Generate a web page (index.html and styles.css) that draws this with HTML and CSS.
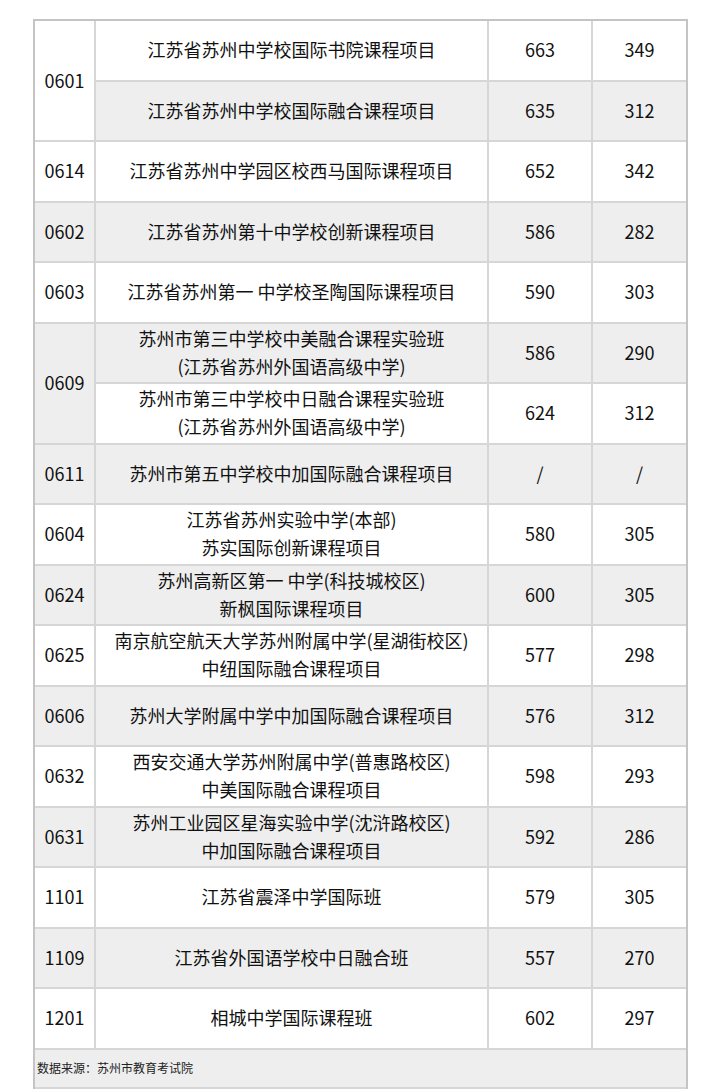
FILE: index.html
```html
<!DOCTYPE html>
<html lang="zh-CN">
<head>
<meta charset="utf-8">
<title>苏州国际课程录取分数</title>
<link rel="stylesheet" href="styles.css">
</head>
<body>
<div class="wrap">
<table class="score-table">
  <colgroup>
    <col class="c-code"><col class="c-name"><col class="c-a"><col class="c-b">
  </colgroup>
  <tbody>
    <tr><td class="code" rowspan="2">0601</td><td class="name">江苏省苏州中学校国际书院课程项目</td><td class="num">663</td><td class="num last">349</td></tr>
    <tr><td class="name">江苏省苏州中学校国际融合课程项目</td><td class="num">635</td><td class="num last">312</td></tr>
    <tr><td class="code">0614</td><td class="name">江苏省苏州中学园区校西马国际课程项目</td><td class="num">652</td><td class="num last">342</td></tr>
    <tr><td class="code">0602</td><td class="name">江苏省苏州第十中学校创新课程项目</td><td class="num">586</td><td class="num last">282</td></tr>
    <tr><td class="code">0603</td><td class="name">江苏省苏州第一 中学校圣陶国际课程项目</td><td class="num">590</td><td class="num last">303</td></tr>
    <tr><td class="code" rowspan="2">0609</td><td class="name">苏州市第三中学校中美融合课程实验班<br>(江苏省苏州外国语高级中学)</td><td class="num">586</td><td class="num last">290</td></tr>
    <tr><td class="name">苏州市第三中学校中日融合课程实验班<br>(江苏省苏州外国语高级中学)</td><td class="num">624</td><td class="num last">312</td></tr>
    <tr><td class="code">0611</td><td class="name">苏州市第五中学校中加国际融合课程项目</td><td class="num">/</td><td class="num last">/</td></tr>
    <tr><td class="code">0604</td><td class="name">江苏省苏州实验中学(本部)<br>苏实国际创新课程项目</td><td class="num">580</td><td class="num last">305</td></tr>
    <tr><td class="code">0624</td><td class="name">苏州高新区第一 中学(科技城校区)<br>新枫国际课程项目</td><td class="num">600</td><td class="num last">305</td></tr>
    <tr><td class="code">0625</td><td class="name">南京航空航天大学苏州附属中学(星湖街校区)<br>中纽国际融合课程项目</td><td class="num">577</td><td class="num last">298</td></tr>
    <tr><td class="code">0606</td><td class="name">苏州大学附属中学中加国际融合课程项目</td><td class="num">576</td><td class="num last">312</td></tr>
    <tr><td class="code">0632</td><td class="name">西安交通大学苏州附属中学(普惠路校区)<br>中美国际融合课程项目</td><td class="num">598</td><td class="num last">293</td></tr>
    <tr><td class="code">0631</td><td class="name">苏州工业园区星海实验中学(沈浒路校区)<br>中加国际融合课程项目</td><td class="num">592</td><td class="num last">286</td></tr>
    <tr><td class="code">1101</td><td class="name">江苏省震泽中学国际班</td><td class="num">579</td><td class="num last">305</td></tr>
    <tr><td class="code">1109</td><td class="name">江苏省外国语学校中日融合班</td><td class="num">557</td><td class="num last">270</td></tr>
    <tr><td class="code">1201</td><td class="name">相城中学国际课程班</td><td class="num">602</td><td class="num last">297</td></tr>
    <tr class="foot"><td class="source last" colspan="4">数据来源：苏州市教育考试院</td></tr>
  </tbody>
</table>
</div>
</body>
</html>
```
FILE: styles.css
```css
html, body {
  margin: 0;
  padding: 0;
  background: #ffffff;
}

body {
  font-family: "Noto Sans CJK SC", "Noto Sans", sans-serif;
  color: #111111;
}

.wrap {
  padding: 19px 0 0 33px;
}

.score-table {
  width: 655px;
  border-collapse: separate;
  border-spacing: 0;
  border-top: 2px solid #c4c4c4;
  border-left: 2px solid #c4c4c4;
  border-right: 2px solid #c4c4c4;
  table-layout: fixed;
}

.c-code { width: 61px; }
.c-name { width: 393px; }
.c-a { width: 104px; }
.c-b { width: 93px; }

.score-table td {
  box-sizing: border-box;
  height: 60.5px;
  padding: 0 2px 2px;
  border-right: 2px solid #d6d6d6;
  border-bottom: 2px solid #d6d6d6;
  text-align: center;
  vertical-align: middle;
  font-size: 18px;
  line-height: 28px;
  background: #ffffff;
}

.score-table td.last {
  border-right: none;
}

.score-table tr:nth-child(even) td {
  background: #eeeeee;
}

.score-table td.code {
  padding: 0 0 2px;
}

.score-table tr.foot td {
  height: 39px;
  font-size: 12px;
  line-height: 16px;
  text-align: left;
  padding: 0 2px;
  color: #222222;
}
```
